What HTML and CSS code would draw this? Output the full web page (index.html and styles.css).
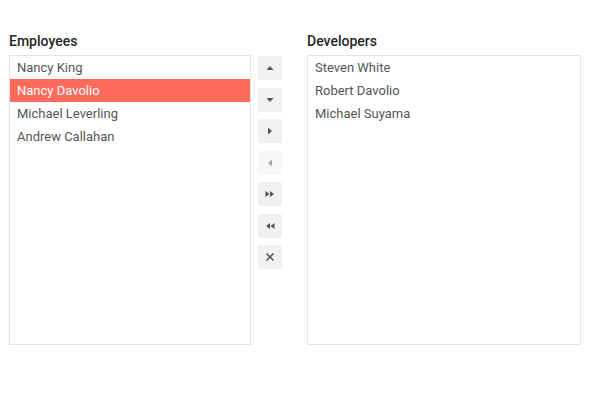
FILE: index.html
```html
<!DOCTYPE html>
<html>
<head>
<meta charset="utf-8">
<link rel="stylesheet" href="styles.css">
</head>
<body>
<div class="page">
  <div class="col col-left">
    <h4 class="title">Employees</h4>
    <ul class="listbox">
      <li class="item">Nancy King</li>
      <li class="item selected">Nancy Davolio</li>
      <li class="item">Michael Leverling</li>
      <li class="item">Andrew Callahan</li>
    </ul>
  </div>
  <div class="toolbar">
    <button class="tb"><svg width="10" height="10" viewBox="0 0 10 10"><path d="M1.5 7L5 3 8.5 7z" fill="#555"/></svg></button>
    <button class="tb"><svg width="10" height="10" viewBox="0 0 10 10"><path d="M1.5 3L5 7 8.5 3z" fill="#555"/></svg></button>
    <button class="tb"><svg width="10" height="10" viewBox="0 0 10 10"><path d="M3 1.5L7 5 3 8.5z" fill="#555"/></svg></button>
    <button class="tb disabled"><svg width="10" height="10" viewBox="0 0 10 10"><path d="M7 1.5L3 5 7 8.5z" fill="#aaa"/></svg></button>
    <button class="tb"><svg width="12" height="10" viewBox="0 0 12 10"><path d="M1.5 2L5.5 5 1.5 8zM6 2L10 5 6 8z" fill="#555"/></svg></button>
    <button class="tb"><svg width="12" height="10" viewBox="0 0 12 10"><path d="M6 2L2 5 6 8zM10.5 2L6.5 5 10.5 8z" fill="#555"/></svg></button>
    <button class="tb"><svg width="10" height="10" viewBox="0 0 10 10"><path d="M1.5 1.5L8.5 8.5M8.5 1.5L1.5 8.5" stroke="#555" stroke-width="1.6"/></svg></button>
  </div>
  <div class="col col-right">
    <h4 class="title">Developers</h4>
    <ul class="listbox">
      <li class="item">Steven White</li>
      <li class="item">Robert Davolio</li>
      <li class="item">Michael Suyama</li>
    </ul>
  </div>
</div>
</body>
</html>
```
FILE: styles.css
```css
html, body {
  margin: 0;
  padding: 0;
  background: #fff;
}
body {
  font-family: Roboto, "Liberation Sans", Arial, sans-serif;
  color: #333;
}
.page {
  display: flex;
  align-items: flex-start;
  padding: 33px 0 0 9px;
}
.col {
  display: flex;
  flex-direction: column;
}
.col-left {
  width: 242px;
}
.col-right {
  width: 274px;
  margin-left: 25px;
}
.title {
  margin: 0;
  height: 22px;
  font-size: 14px;
  font-weight: 500;
  color: #262626;
  line-height: 16px;
}
.listbox {
  list-style: none;
  margin: 0;
  padding: 0;
  height: 288px;
  border: 1px solid #e4e4e4;
  box-shadow: 0 2px 4px rgba(0,0,0,0.03);
}
.item {
  height: 23px;
  line-height: 23px;
  padding-left: 7px;
  font-size: 13px;
  color: #555;
}
.item.selected {
  background: #ff6a5c;
  color: #fff;
}
.toolbar {
  display: flex;
  flex-direction: column;
  gap: 7.5px;
  margin: 23px 0 0 7px;
  width: 24px;
}
.tb {
  width: 24px;
  height: 24px;
  padding: 0;
  border: none;
  border-radius: 2px;
  background: #f1f1f1;
  display: flex;
  align-items: center;
  justify-content: center;
}
.tb.disabled {
  background: #f7f7f7;
}
.tb svg {
  display: block;
}
```
